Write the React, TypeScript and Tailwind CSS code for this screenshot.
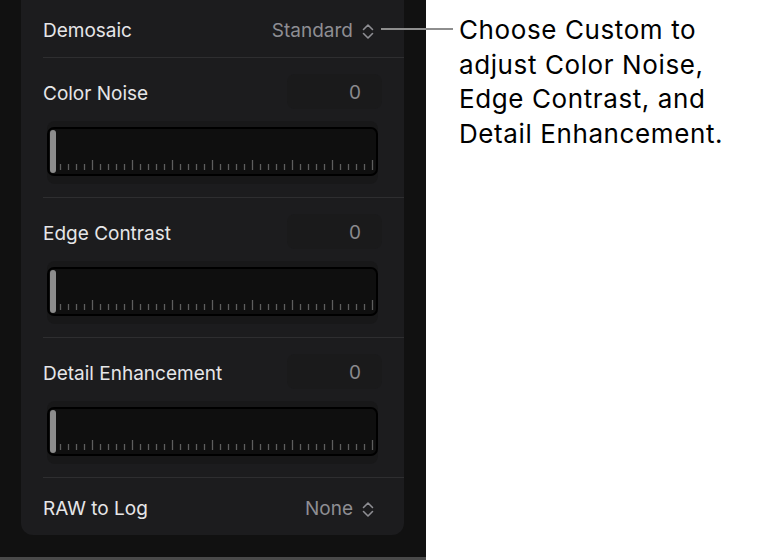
import React from "react";

const FONT = { fontFamily: "Inter, 'Noto Sans', sans-serif" };

function Chevrons() {
  return (
    <svg width="14" height="17" viewBox="0 0 14 17" className="shrink-0">
      <path d="M2.5 6.5 L7 2 L11.5 6.5" fill="none" stroke="#8e8e93" strokeWidth="1.6" strokeLinecap="round" strokeLinejoin="round" />
      <path d="M2.5 10.5 L7 15 L11.5 10.5" fill="none" stroke="#8e8e93" strokeWidth="1.6" strokeLinecap="round" strokeLinejoin="round" />
    </svg>
  );
}

function Ticks() {
  const ticks = Array.from({ length: 40 }, (_, i) => i);
  return (
    <svg width="326" height="44" viewBox="0 0 326 44" className="absolute left-0 top-0">
      {ticks.map((i) => {
        const x = 11.5 + i * 8;
        const tall = i % 5 === 4;
        return <line key={i} x1={x} x2={x} y1={tall ? 31 : 35} y2={41} stroke="#5e5e5e" strokeWidth="1.3" />;
      })}
    </svg>
  );
}

function Slider() {
  return (
    <div className="ml-[4px] h-[63px] w-[331px] rounded-[8px] bg-[#181819] pt-[6px]">
      <div className="relative h-[49px] w-[331px] rounded-[7px] border-2 border-black bg-[#0f0f0f]">
        <Ticks />
        <div className="absolute left-[1px] top-[1px] h-[43px] w-[6px] rounded-full bg-[#8c8c8c]" />
      </div>
    </div>
  );
}

function Section({ label }: { label: string }) {
  return (
    <div className="ml-[22px] border-b border-[#2e2e30] pb-[13px] pt-[16px]">
      <div className="flex h-[35px] items-center justify-between pr-[22px]">
        <span className="pt-[5px] text-[19px] text-[#e6e6e8]">{label}</span>
        <div className="flex h-[35px] w-[95px] items-center justify-end rounded-[8px] bg-[#1a1a1b] pr-[21px] pt-[4px] text-[19px] text-[#8a8a8d]">
          0
        </div>
      </div>
      <div className="mt-[12px]">
        <Slider />
      </div>
    </div>
  );
}

export default function App() {
  return (
    <div className="relative flex h-[560px] w-[766px] overflow-hidden bg-white" style={FONT}>
      <div className="flex h-[560px] w-[426px] shrink-0 flex-col border-b-[3px] border-[#4a4a4a] bg-[#111111]">
        <div className="ml-[21px] w-[383px] rounded-b-[12px] bg-[#1c1c1e]">
          <div className="ml-[22px] flex h-[58px] items-center justify-between border-b border-[#2e2e30] pr-[29px] pt-[5px]">
            <span className="text-[19px] text-[#e6e6e8]">Demosaic</span>
            <span className="flex items-center gap-[8px] text-[19px] text-[#8e8e93]">
              Standard
              <Chevrons />
            </span>
          </div>
          <Section label="Color Noise" />
          <Section label="Edge Contrast" />
          <Section label="Detail Enhancement" />
          <div className="ml-[22px] flex h-[57px] items-center justify-between pr-[29px] pt-[5px]">
            <span className="text-[19px] text-[#e6e6e8]">RAW to Log</span>
            <span className="flex items-center gap-[8px] text-[19px] text-[#8e8e93]">
              None
              <Chevrons />
            </span>
          </div>
        </div>
      </div>
      <div className="pl-[33px] pt-[13px] text-[26px] leading-[34.5px] tracking-[0.6px] text-black">
        Choose Custom to
        <br />
        adjust Color Noise,
        <br />
        Edge Contrast, and
        <br />
        Detail Enhancement.
      </div>
      {/* callout leader line */}
      <div className="absolute left-[381px] top-[28px] h-[2px] w-[72px] bg-[#8e8e8e]" />
    </div>
  );
}
